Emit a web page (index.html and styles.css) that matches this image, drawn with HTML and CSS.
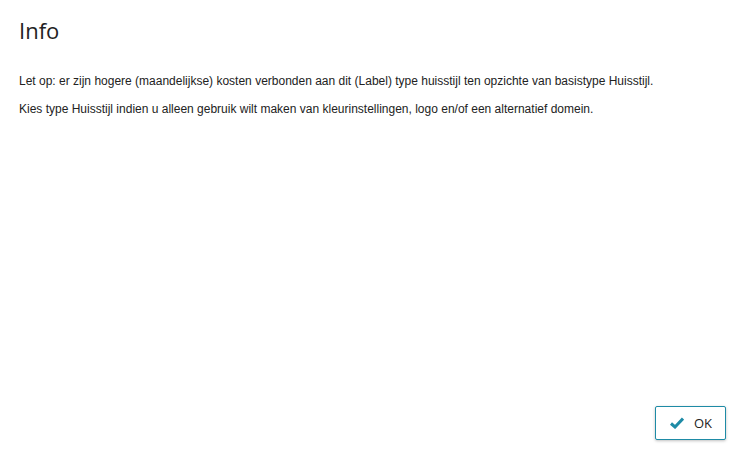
FILE: index.html
```html
<!DOCTYPE html>
<html>
<head>
<meta charset="utf-8">
<link rel="stylesheet" href="styles.css">
</head>
<body>
<div class="dialog">
  <h1 class="title">Info</h1>
  <div class="content">
    <p>Let op: er zijn hogere (maandelijkse) kosten verbonden aan dit (Label) type huisstijl ten opzichte van basistype Huisstijl.</p>
    <p>Kies type Huisstijl indien u alleen gebruik wilt maken van kleurinstellingen, logo en/of een alternatief domein.</p>
  </div>
  <div class="footer">
    <button class="btn">
      <svg class="icon" width="14" height="12" viewBox="0 0 14 12"><path d="M1 6.5 L5 10 L13 1.5" fill="none" stroke="#1e8ba6" stroke-width="3" stroke-linejoin="miter"/></svg>
      <span>OK</span>
    </button>
  </div>
</div>
</body>
</html>
```
FILE: styles.css
```css
html, body { margin: 0; padding: 0; background: #fff; }
.dialog {
  width: 741px; height: 456px; box-sizing: border-box;
  padding: 15px 15px 15px 19px;
  display: flex; flex-direction: column;
}
.title {
  margin: 0; font-family: "Open Sans", "Segoe UI", sans-serif;
  font-weight: 400; font-size: 22px; line-height: 30px; color: #222;
}
.content {
  flex: 1; padding-top: 29px;
  font-family: "Liberation Sans", Arial, sans-serif; font-size: 12px; color: #222;
}
.content p { margin: 0 0 14px 0; line-height: 14px; }
.footer { display: flex; justify-content: flex-end; padding-bottom: 1px; }
.btn {
  display: flex; align-items: center; gap: 10px;
  height: 34px; width: 71px; box-sizing: border-box;
  padding: 0 0 0 14px;
  border: 1px solid #1e8ba6; border-radius: 2px; background: #fff;
  box-shadow: 0 1px 3px rgba(0,0,0,0.25);
  font-family: "Open Sans", sans-serif; font-size: 13px; color: #222;
}
.icon { display: block; }
```
